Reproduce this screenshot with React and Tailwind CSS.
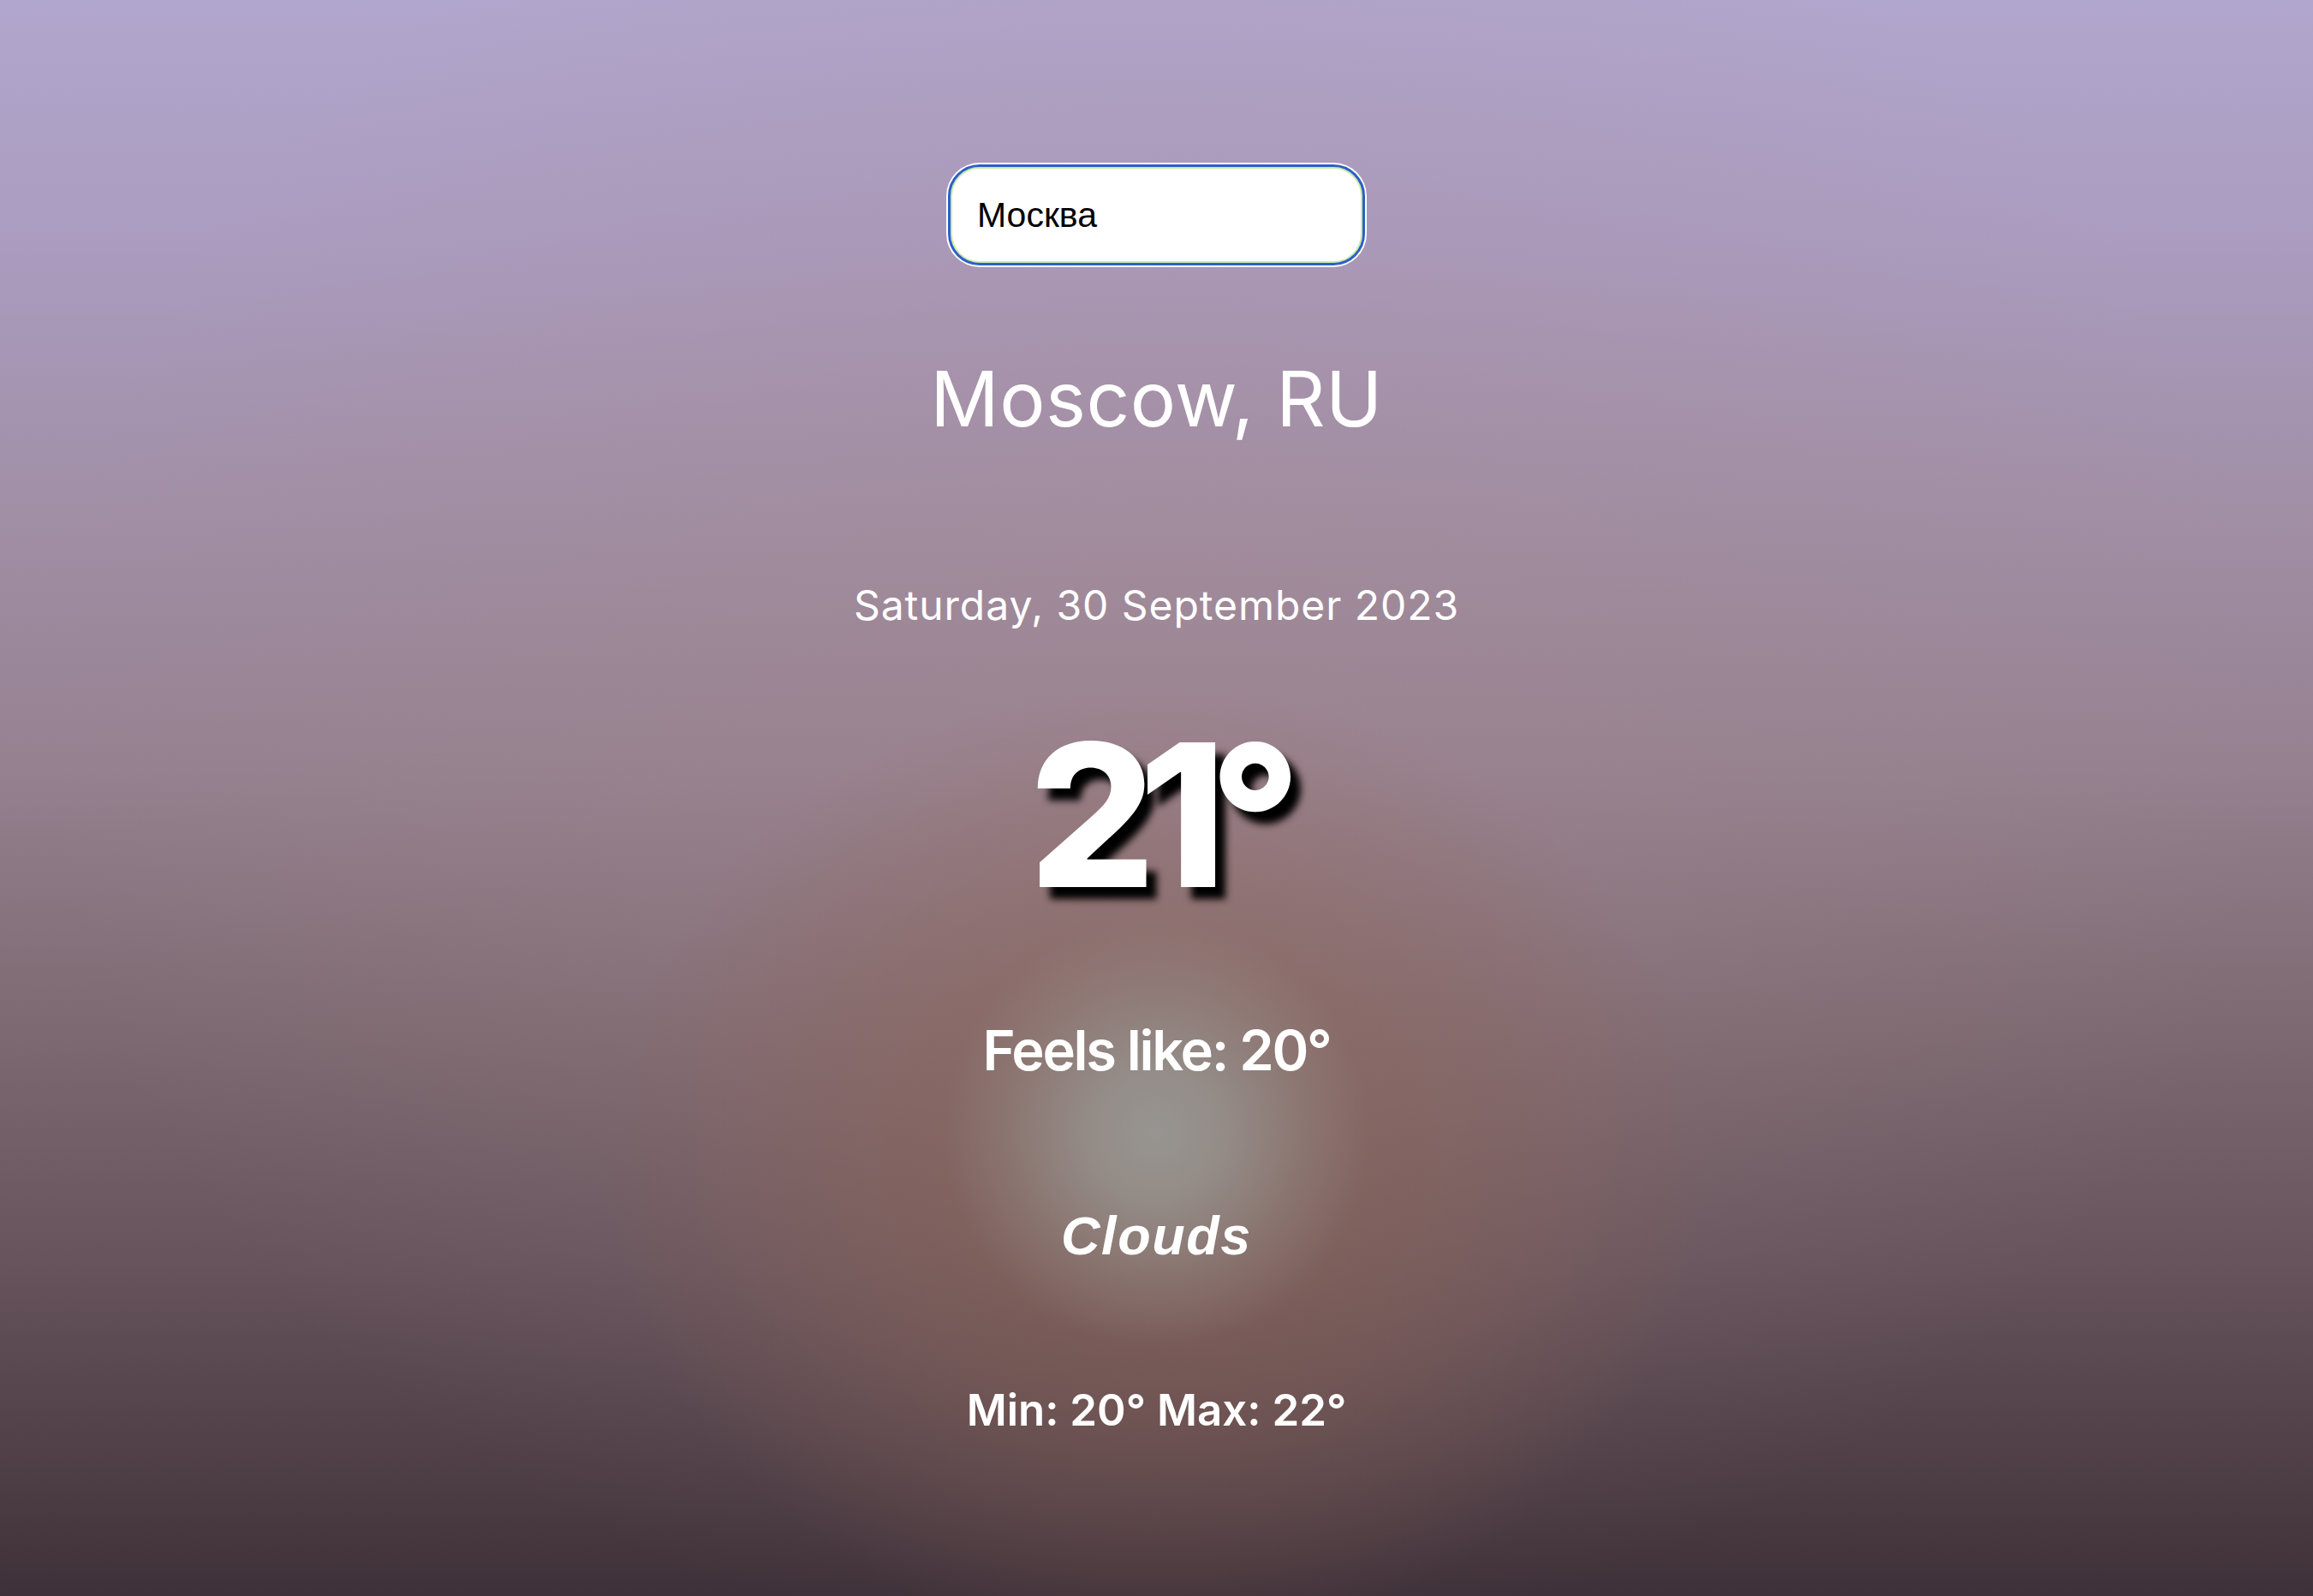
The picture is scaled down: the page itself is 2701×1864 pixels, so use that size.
import React, { useState } from 'react';

const weather = {
  city: 'Moscow',
  country: 'RU',
  date: 'Saturday, 30 September 2023',
  temp: 21,
  feelsLike: 20,
  main: 'Clouds',
  min: 20,
  max: 22,
};

const App = () => {
  const [query, setQuery] = useState('Москва');

  return (
    <div className="min-h-screen w-full flex flex-col items-center text-white font-['Inter',sans-serif] bg-[radial-gradient(circle_at_50%_71%,#979591_0px,rgba(151,149,145,0.8)_80px,rgba(151,149,145,0.35)_170px,rgba(151,149,145,0)_250px),radial-gradient(ellipse_640px_560px_at_50%_73%,rgba(140,100,86,0.72)_0%,rgba(140,100,86,0.38)_55%,rgba(140,100,86,0)_100%),radial-gradient(ellipse_1300px_1100px_at_50%_45%,rgba(165,135,140,0.35)_0%,rgba(165,135,140,0)_100%),linear-gradient(180deg,#b1a6cd_0%,#ab9cc0_15%,#a18fa6_32%,#958190_48%,#7e6a72_64%,#65525a_80%,#4e3e46_92%,#3f3139_100%)]">
      <input
        value={query}
        onChange={(e) => setQuery(e.target.value)}
        className="mt-[195px] w-[481px] h-[112px] rounded-[34px] bg-white border-2 border-[#cdeaa8] outline-[3px] outline-solid outline-[#2c60c8] shadow-[0_0_0_5px_#ffffff] pl-[29px] text-[41px] text-black font-['Liberation_Sans',Arial,sans-serif]"
      />

      <h1 className="mt-[114px] text-[89px] leading-none font-normal tracking-[0.005em]">
        {weather.city}, {weather.country}
      </h1>

      <p className="mt-[173px] text-[48px] leading-none font-normal tracking-[0.02em]">{weather.date}</p>

      <p className="mt-[105px] text-[232px] leading-none font-extrabold tracking-[-0.085em] [text-shadow:12px_14px_8px_#000]">
        {weather.temp}°
      </p>

      <p className="mt-[126px] text-[65px] leading-none font-semibold tracking-[-0.035em]">
        Feels like: {weather.feelsLike}°
      </p>

      <p className="mt-[153px] text-[63px] leading-none font-bold italic tracking-[0.025em] font-['Liberation_Sans',Arial,sans-serif]">
        {weather.main}
      </p>

      <p className="mt-[146px] text-[51px] leading-none font-semibold">
        Min: {weather.min}° Max: {weather.max}°
      </p>
    </div>
  );
};

export default App;
